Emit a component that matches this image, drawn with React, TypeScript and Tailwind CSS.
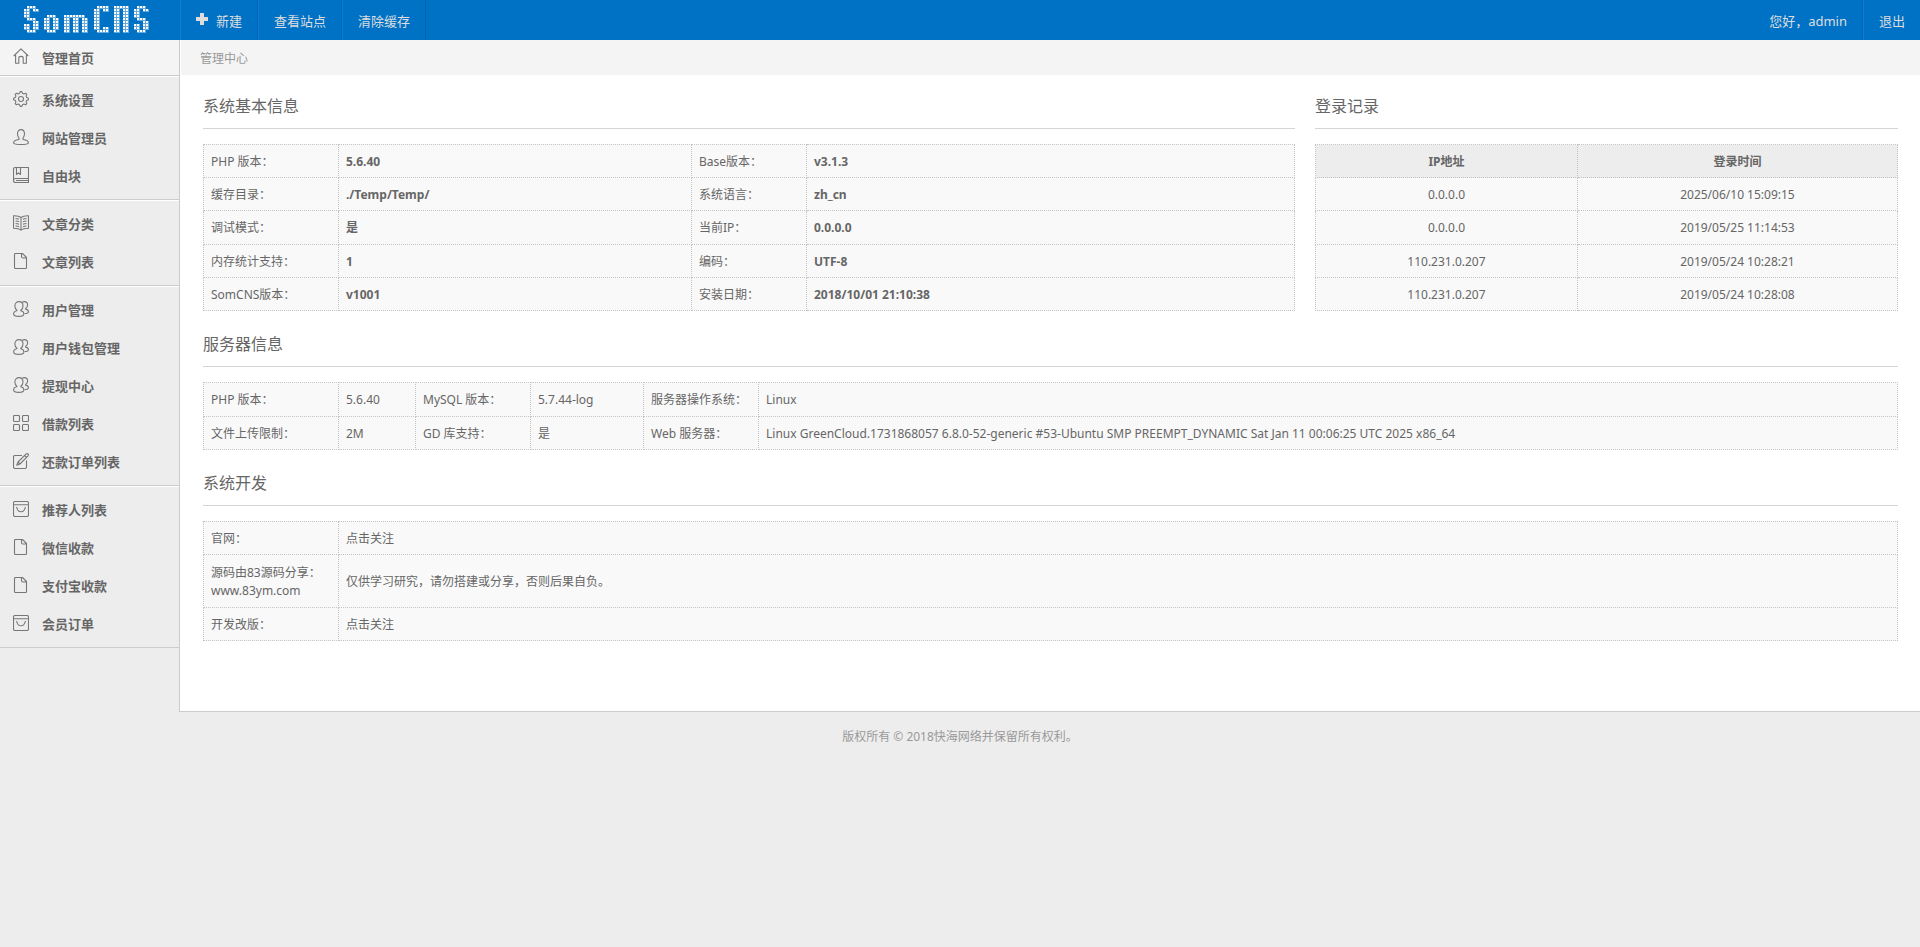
import type { ReactNode } from 'react';

// Dot-matrix wordmark: each glyph has its left edge and nine rows of dots
const LOGO_GLYPHS: { x: number; rows: string[] }[] = [
  { x: 0, rows: ['.###.', '##.##', '##...', '##...', '.###.', '...##', '##.##', '##.##', '.###.'] },
  { x: 20, rows: ['', '', '', '.###.', '##.##', '##.##', '##.##', '##.##', '.###.'] },
  {
    x: 40,
    rows: ['', '', '', '#######.', '##.##.##', '##.##.##', '##.##.##', '##.##.##', '##.##.##'],
  },
  { x: 70, rows: ['.####', '##.##', '##...', '##...', '##...', '##...', '##...', '##.##', '.####'] },
  { x: 90, rows: ['#####', '##.##', '##.##', '##.##', '##.##', '##.##', '##.##', '##.##', '##.##'] },
  { x: 110, rows: ['.###.', '##.##', '##...', '##...', '.###.', '...##', '##.##', '##.##', '.###.'] },
];

function Logo() {
  return (
    <svg width="126" height="28" viewBox="0 0 126 28" role="img" aria-label="SomCNS">
      {LOGO_GLYPHS.flatMap((glyph) =>
        glyph.rows.flatMap((row, y) =>
          row.split('').map((cell, i) =>
            cell === '#' ? (
              <g key={`${glyph.x}-${y}-${i}`} fill="#fff">
                <rect x={glyph.x + i * 3} y={y * 3} width="3" height="3" opacity=".4" />
                <rect x={glyph.x + i * 3} y={y * 3} width="2" height="2" />
              </g>
            ) : null,
          ),
        ),
      )}
    </svg>
  );
}

const ICONS: Record<string, ReactNode> = {
  home: <path d="M.7 8 8 .9 15.3 8M2.6 7v8.3h3.2V10q0-1.6 2.2-1.6T10.200 10v5.300h3.200V7" />,
  gear: (
    <>
      <path d="M6.500 2.300 7.200.6h1.600l.7 1.700 1.400.6 1.700-.7 1.200 1.200-.7 1.700.6 1.400 1.700.7v1.600l-1.700.7-.6 1.400.7 1.700-1.200 1.200-1.700-.7-1.400.6-.7 1.700H7.200l-.7-1.700-1.400-.6-1.700.7-1.200-1.200.7-1.700-.6-1.400-1.700-.7V7.200l1.700-.7.6-1.400-.7-1.700 1.200-1.200 1.700.7z" />
      <circle cx="8" cy="8" r="2.500" />
    </>
  ),
  user: (
    <path d="M8 .6c2.300 0 3.500 1.700 3.500 4.200 0 2-.7 3.400-1.500 4.400v1.300c2.800.4 5.400 1.500 5.400 3.200 0 1.400-2 1.800-7.400 1.800S.6 15.100.6 13.700c0-1.700 2.600-2.800 5.400-3.200V9.200C5.200 8.200 4.500 6.800 4.500 4.800 4.500 2.300 5.700.6 8 .6z" />
  ),
  block: <path d="M2.500.5h13v15H2.500q-2 0-2-2v-11q0-2 2-2zM.6 13q.3-1.500 2-1.500h12.900M3.500.5v7l2-1.700 2 1.700v-7M3 13.500h12" />,
  book: (
    <path d="M8 2.500C6.500 1.200 4 .7.500.8v12.400c3.500 0 6 .5 7.500 1.900 1.500-1.400 4-1.900 7.500-1.900V.8C12 .7 9.500 1.200 8 2.500zM8 2.500v12.600M2.500 3.500q2 0 3.500.8M2.500 6q2 0 3.500.8M2.500 8.500q2 0 3.500.8M2.500 11q2 0 3.500.8M13.500 3.500q-2 0-3.500.8M13.500 6q-2 0-3.500.8M13.500 8.500q-2 0-3.500.8M13.500 11q-2 0-3.500.8" />
  ),
  file: <path d="M2.500.5h7l4 4v10q0 1-1 1h-10q-1 0-1-1v-13q0-1 1-1zM8.500.8v2.700q0 1.500 1.500 1.500h3.300" />,
  users: (
    <>
      <path d="M6 .6c2.400 0 4 1.700 4 4.300 0 1.900-.9 3.500-2.200 4.300v.5c1.800.3 3.100 1.500 3.100 3.400 0 1.700-1.500 2.300-5.100 2.300S.6 14.800.6 13.100c0-1.900 1.500-3.100 3.300-3.400v-.5C2.600 8.400 1.900 6.800 1.900 4.900 1.900 2.300 3.600.6 6 .6z" />
      <path d="M9.300 1.200c.6-.4 1.200-.6 2-.6 2 0 3.300 1.400 3.300 3.400 0 1.600-.8 2.900-2 3.600v.5c1.700.3 2.800 1.200 2.800 2.600 0 1.200-1.200 1.800-3.700 1.800" />
    </>
  ),
  grid: (
    <>
      <rect x=".5" y=".5" width="6" height="6" rx="1" />
      <rect x="9.500" y=".5" width="6" height="6" rx="1" />
      <rect x=".5" y="9.500" width="6" height="6" rx="1" />
      <rect x="9.500" y="9.500" width="6" height="6" rx="1" />
    </>
  ),
  edit: (
    <path d="M9 2.500H2q-1.500 0-1.500 1.500v10q0 1.500 1.500 1.500h10q1.500 0 1.500-1.500V7.500M13.200.9q1-.7 1.800.1t.1 1.800L7 11l-3.200 1.200L5 9zM11.600 2.500l1.900 1.900M5 9l2 2" />
  ),
  bag: <path d="M2 .5h12q1.500 0 1.500 1.500v12q0 1.500-1.500 1.500H2Q.5 15.500.5 14V2Q.5.5 2 .5zM.5 3.800h15M3.700 6v1.200M12.300 6v1.200M4 7c.5 2.500 2 3.800 4 3.800s3.500-1.300 4-3.800" />,
};

const MENU: { icon: string; label: string }[][] = [
  [
    { icon: 'gear', label: '系统设置' },
    { icon: 'user', label: '网站管理员' },
    { icon: 'block', label: '自由块' },
  ],
  [
    { icon: 'book', label: '文章分类' },
    { icon: 'file', label: '文章列表' },
  ],
  [
    { icon: 'users', label: '用户管理' },
    { icon: 'users', label: '用户钱包管理' },
    { icon: 'users', label: '提现中心' },
    { icon: 'grid', label: '借款列表' },
    { icon: 'edit', label: '还款订单列表' },
  ],
  [
    { icon: 'bag', label: '推荐人列表' },
    { icon: 'file', label: '微信收款' },
    { icon: 'file', label: '支付宝收款' },
    { icon: 'bag', label: '会员订单' },
  ],
];

function MenuLink({ icon, label }: { icon: string; label: string }) {
  return (
    <a href="#" className="flex h-[38px] items-center gap-[13px] pl-[13px] text-[13px] font-bold text-[#666]">
      <svg
        width="16"
        height="16"
        viewBox="0 0 16 16"
        fill="none"
        stroke="#777"
        strokeWidth="1.1"
        strokeLinejoin="round"
        className="mb-[3px] shrink-0"
        aria-hidden="true"
      >
        {ICONS[icon]}
      </svg>
      {label}
    </a>
  );
}

function Sidebar() {
  return (
    <nav className="w-[180px] shrink-0 border-r border-[#ccc] bg-[#ededed]">
      <div className="flex h-9 flex-col justify-center border-b border-[#ccc] bg-[#f4f4f4]">
        <MenuLink icon="home" label="管理首页" />
      </div>
      {MENU.map((group) => (
        <div key={group[0].label} className="border-t border-b border-t-white border-b-[#ccc] pt-1 pb-1">
          {group.map((item) => (
            <MenuLink key={item.label} {...item} />
          ))}
        </div>
      ))}
    </nav>
  );
}

const NAV_LINK = 'flex h-10 items-center border-r border-l border-l-[#0e7fd8] border-r-[#0064b1] px-[15px] pt-px';

function Header() {
  return (
    <header className="flex h-10 bg-[#0072c6] text-[13px] text-[#ddd]">
      <a href="#" className="flex w-[180px] shrink-0 items-center pl-6">
        <Logo />
      </a>
      <a href="#" className={`${NAV_LINK} gap-2`}>
        <svg width="12" height="12" viewBox="0 0 12 12" className="mb-1" aria-hidden="true">
          <path d="M4 0h4v4h4v4H8v4H4V8H0V4h4z" fill="#ddd" />
        </svg>
        新建
      </a>
      <a href="#" className={NAV_LINK}>查看站点</a>
      <a href="#" className={NAV_LINK}>清除缓存</a>
      <div className="ml-auto flex">
        <span className="flex items-center border-r border-[#0064b1] px-[15px] pt-px">您好，admin</span>
        <a href="#" className="flex items-center border-l border-[#0e7fd8] px-[15px] pt-px">退出</a>
      </div>
    </header>
  );
}

const TABLE = 'w-full table-fixed border-collapse bg-[#f9f9f9]';
const CELL = 'h-[33px] border border-dotted border-[#c4c4c4] px-[7px] pt-[2px] pb-0';

function Heading({ children }: { children: ReactNode }) {
  return (
    <h2 className="mb-[15px] flex h-10 items-start border-b border-[#d5d5d5] pt-[5px] text-[16px] leading-6 text-[#666]">
      {children}
    </h2>
  );
}

const BASIC = [
  ['PHP 版本：', '5.6.40', 'Base版本：', 'v3.1.3'],
  ['缓存目录：', './Temp/Temp/', '系统语言：', 'zh_cn'],
  ['调试模式：', '是', '当前IP：', '0.0.0.0'],
  ['内存统计支持：', '1', '编码：', 'UTF-8'],
  ['SomCNS版本：', 'v1001', '安装日期：', '2018/10/01 21:10:38'],
];

const LOGINS = [
  ['0.0.0.0', '2025/06/10 15:09:15'],
  ['0.0.0.0', '2019/05/25 11:14:53'],
  ['110.231.0.207', '2019/05/24 10:28:21'],
  ['110.231.0.207', '2019/05/24 10:28:08'],
];

const SERVER = [
  ['PHP 版本：', '5.6.40', 'MySQL 版本：', '5.7.44-log', '服务器操作系统：', 'Linux'],
  [
    '文件上传限制：',
    '2M',
    'GD 库支持：',
    '是',
    'Web 服务器：',
    'Linux GreenCloud.1731868057 6.8.0-52-generic #53-Ubuntu SMP PREEMPT_DYNAMIC Sat Jan 11 00:06:25 UTC 2025 x86_64',
  ],
];

export default function App() {
  return (
    <div className="min-h-screen bg-[#ededed] font-['Noto_Sans','Noto_Sans_CJK_SC',sans-serif] text-[12px] leading-[18px] text-[#666]">
      <Header />
      <div className="flex">
        <Sidebar />
        <main className="min-w-0 flex-1 border-b border-[#ccc] bg-white">
          <div className="ml-px flex h-[35px] items-center bg-[#f4f4f4] pt-[3px] pl-[19px] text-[#999]">管理中心</div>
          <div className="flex flex-col gap-4 pt-[14px] pr-[22px] pb-[70px] pl-[23px]">
            <div className="flex gap-5">
              <section className="min-w-0 flex-[1092]">
                <Heading>系统基本信息</Heading>
                <table className={`${TABLE} h-[167px]`}>
                  <colgroup>
                    <col className="w-[135px]" />
                    <col className="w-[353px]" />
                    <col className="w-[115px]" />
                    <col />
                  </colgroup>
                  <tbody>
                    {BASIC.map((row) => (
                      <tr key={row[0]}>
                        <td className={CELL}>{row[0]}</td>
                        <td className={`${CELL} font-bold`}>{row[1]}</td>
                        <td className={CELL}>{row[2]}</td>
                        <td className={`${CELL} font-bold`}>{row[3]}</td>
                      </tr>
                    ))}
                  </tbody>
                </table>
              </section>
              <section className="min-w-0 flex-[583]">
                <Heading>登录记录</Heading>
                <table className={`${TABLE} h-[167px] text-center`}>
                  <thead className="bg-[#ededed]">
                    <tr>
                      <th className={`${CELL} w-[45%] font-bold`}>IP地址</th>
                      <th className={`${CELL} font-bold`}>登录时间</th>
                    </tr>
                  </thead>
                  <tbody>
                    {LOGINS.map(([ip, time]) => (
                      <tr key={time}>
                        <td className={CELL}>{ip}</td>
                        <td className={CELL}>{time}</td>
                      </tr>
                    ))}
                  </tbody>
                </table>
              </section>
            </div>
            <section>
              <Heading>服务器信息</Heading>
              <table className={`${TABLE} h-[68px]`}>
                <colgroup>
                  <col className="w-[135px]" />
                  <col className="w-[77px]" />
                  <col className="w-[115px]" />
                  <col className="w-[113px]" />
                  <col className="w-[115px]" />
                  <col />
                </colgroup>
                <tbody>
                  {SERVER.map((row) => (
                    <tr key={row[0]}>
                      {row.map((text) => (
                        <td key={text} className={CELL}>{text}</td>
                      ))}
                    </tr>
                  ))}
                </tbody>
              </table>
            </section>
            <section>
              <Heading>系统开发</Heading>
              <table className={`${TABLE} h-[120px]`}>
                <colgroup>
                  <col className="w-[135px]" />
                  <col />
                </colgroup>
                <tbody>
                  <tr>
                    <td className={CELL}>官网：</td>
                    <td className={CELL}><a href="#">点击关注</a></td>
                  </tr>
                  <tr className="h-[52px]">
                    <td className={CELL}>源码由83源码分享：<br />www.83ym.com</td>
                    <td className={CELL}>仅供学习研究，请勿搭建或分享，否则后果自负。</td>
                  </tr>
                  <tr>
                    <td className={CELL}>开发改版：</td>
                    <td className={CELL}><a href="#">点击关注</a></td>
                  </tr>
                </tbody>
              </table>
            </section>
          </div>
        </main>
      </div>
      <footer className="py-4 text-center text-[#999]">版权所有 © 2018快海网络并保留所有权利。</footer>
    </div>
  );
}
